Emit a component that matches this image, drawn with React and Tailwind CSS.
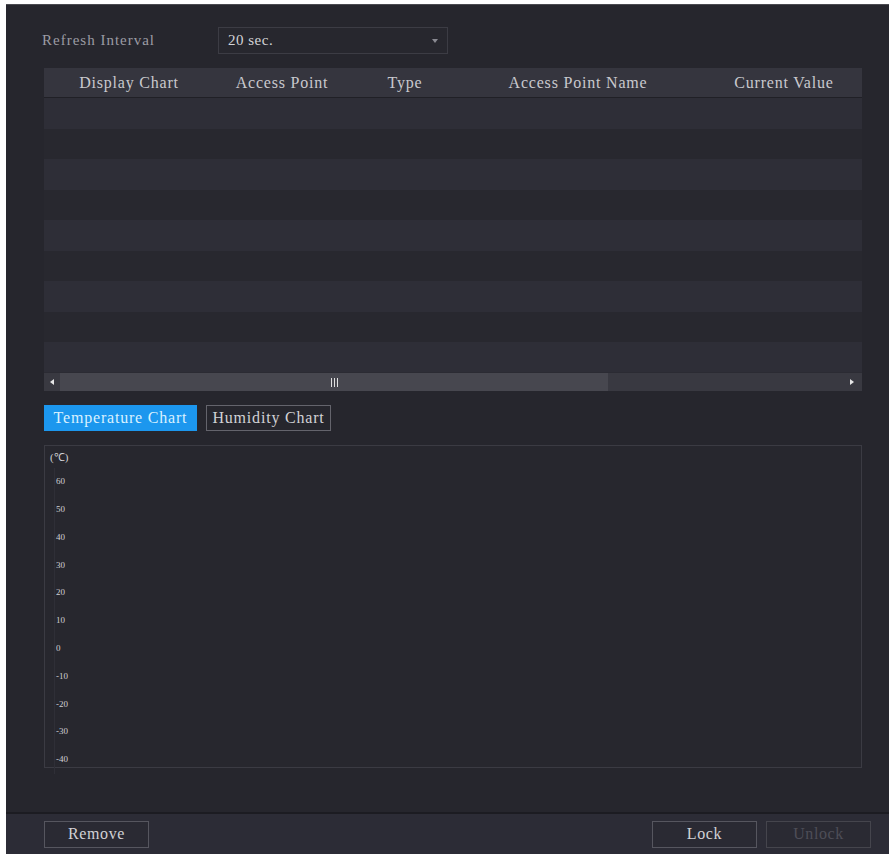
// Temperature / humidity monitor panel (dark NVR style).

const COLUMNS = [
  { label: "Display Chart", w: "w-[170px]" },
  { label: "Access Point", w: "w-[136px]" },
  { label: "Type", w: "w-[110px]" },
  { label: "Access Point Name", w: "w-[236px]" },
  { label: "Current Value", w: "w-[176px]" },
];

const ROWS = [31, 30, 31, 30, 31, 30, 31, 30, 30];

const TICKS = ["60", "50", "40", "30", "20", "10", "0", "-10", "-20", "-30", "-40"];

const serif = "font-['Liberation_Serif',serif]";

function Button({ children, disabled = false }) {
  return (
    <button
      className={`h-[27px] w-[105px] border text-[16px] tracking-[0.6px] ${serif} ${
        disabled
          ? "border-[#45454d] bg-[#2a2a33] text-[#4e4e58]"
          : "border-[#56565f] bg-[#2a2a33] text-[#d2d2d6]"
      }`}
    >
      {children}
    </button>
  );
}

function ScrollBar() {
  return (
    <div className="relative flex h-[19px] items-center border-t border-[#2b2b33] bg-[#393941]">
      <div className="flex w-[16px] justify-center">
        <div className="h-0 w-0 border-y-[3px] border-r-[4px] border-y-transparent border-r-[#e6e6e6]" />
      </div>
      <div className="relative flex h-full w-[548px] items-center justify-center bg-[#47474f]">
        <div className="flex gap-[2px]">
          <div className="h-[9px] w-[1px] bg-[#e0e0e0]" />
          <div className="h-[9px] w-[1px] bg-[#e0e0e0]" />
          <div className="h-[9px] w-[1px] bg-[#e0e0e0]" />
        </div>
      </div>
      <div className="flex-1" />
      <div className="flex w-[20px] justify-center">
        <div className="h-0 w-0 border-y-[3px] border-l-[4px] border-y-transparent border-l-[#e6e6e6]" />
      </div>
    </div>
  );
}

export default function App() {
  return (
    <div className="h-[854px] w-[892px] bg-white pl-[6px] pr-[3px] pt-[4px]">
      <div className={`flex h-full flex-col border-t border-[#4a4a50] bg-[#26262d] ${serif}`}>
        <div className="flex-1 pl-[38px] pr-[27px]">
          {/* refresh interval */}
          <div className="mt-[22px] flex h-[27px] items-center">
            <span className="-ml-[2px] w-[176px] text-[15px] tracking-[1px] text-[#9c9ca4]">
              Refresh Interval
            </span>
            <div className="flex h-[27px] w-[230px] items-center justify-between border border-[#3c3c44] bg-[#27272e] pl-[9px] pr-[9px]">
              <span className="text-[15px] tracking-[0.5px] text-[#d4d4d8]">20 sec.</span>
              <div className="h-0 w-0 border-x-[3px] border-t-[4px] border-x-transparent border-t-[#8a8a92]" />
            </div>
          </div>

          {/* table */}
          <div className="mt-[14px] overflow-hidden">
            <div className="flex h-[30px] items-center border-b border-[#202026] bg-[#35353e] text-[16px] tracking-[0.8px] text-[#c9c9ce]">
              {COLUMNS.map((c) => (
                <div key={c.label} className={`${c.w} shrink-0 text-center whitespace-nowrap`}>
                  {c.label}
                </div>
              ))}
            </div>
            {ROWS.map((h, i) => (
              <div
                key={i}
                className={i % 2 === 0 ? "bg-[#2e2e37]" : "bg-[#28282f]"}
                style={{ height: h }}
              />
            ))}
            <ScrollBar />
          </div>

          {/* chart tabs */}
          <div className="mt-[14px] flex h-[26px] gap-[9px] text-[16px] tracking-[0.8px]">
            <div className="flex w-[153px] items-center justify-center bg-[#1c97ee] text-[#d9f1ff]">
              Temperature Chart
            </div>
            <div className="flex w-[125px] items-center justify-center border border-[#64646c] text-[#d2d2d6]">
              Humidity Chart
            </div>
          </div>

          {/* chart */}
          <div className="mt-[14px] h-[323px] border border-[#3b3b43] bg-[#27272e] pl-[5px] pt-[4px]">
            <div className="h-[15px] text-[11px] leading-[15px] text-[#d0d0d4]">(℃)</div>
            <div className="ml-[4px] mt-[3px] flex flex-col border-l border-[#2f2f37]">
              {TICKS.map((t) => (
                <div key={t} className="flex h-[27.8px] items-center pl-[1px] text-[9px] text-[#d0d0d4]">
                  {t}
                </div>
              ))}
            </div>
          </div>
        </div>

        {/* footer */}
        <div className="flex h-[42px] items-center border-t-2 border-[#1c1c22] bg-[#2c2c36] pl-[38px] pr-[18px]">
          <Button>Remove</Button>
          <div className="flex-1" />
          <Button>Lock</Button>
          <div className="w-[9px]" />
          <Button disabled>Unlock</Button>
        </div>
      </div>
    </div>
  );
}
